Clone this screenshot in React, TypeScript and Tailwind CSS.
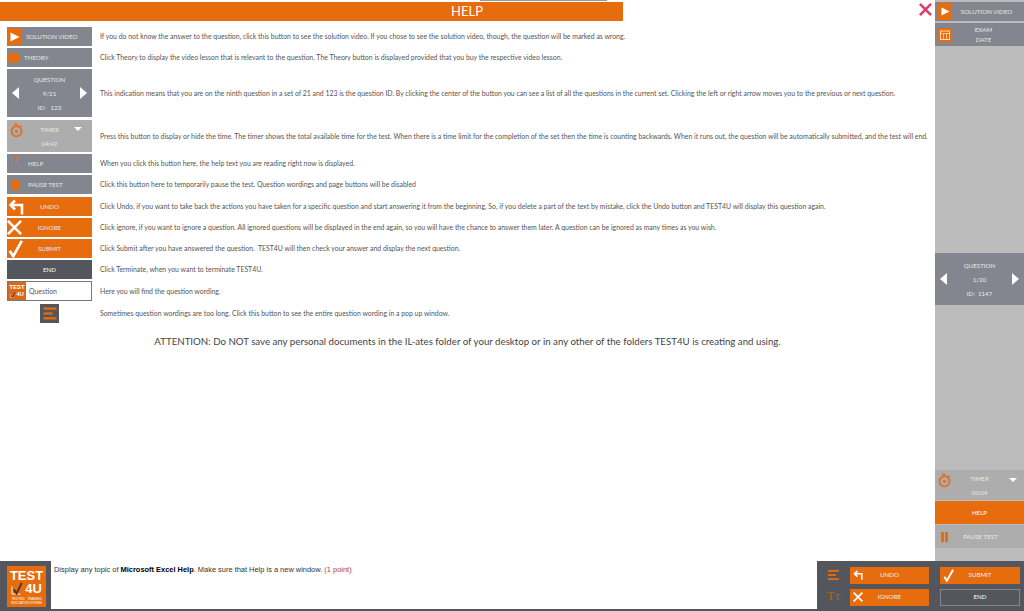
import type { ReactNode } from 'react'

const rows = [
  { h: 'h-[19px]', mt: '', text: 'If you do not know the answer to the question, click this button to see the solution video. If you chose to see the solution video, though, the question will be marked as wrong.' },
  { h: 'h-[19px]', mt: 'mt-[2px]', text: 'Click Theory to display the video lesson that is relevant to the question. The Theory button is displayed provided that you buy the respective video lesson.' },
  { h: 'h-[48px]', mt: 'mt-[2px]', text: 'This indication means that you are on the ninth question in a set of 21 and 123 is the question ID. By clicking the center of the button you can see a list of all the questions in the current set. Clicking the left or right arrow moves you to the previous or next question.' },
  { h: 'h-[32px]', mt: 'mt-[3px]', text: 'Press this button to display or hide the time. The timer shows the total available time for the test. When there is a time limit for the completion of the set then the time is counting backwards. When it runs out, the question will be automatically submitted, and the test will end.' },
  { h: 'h-[19px]', mt: 'mt-[2px]', text: 'When you click this button here, the help text you are reading right now is displayed.' },
  { h: 'h-[19px]', mt: 'mt-[2px]', text: 'Click this button here to temporarily pause the test. Question wordings and page buttons will be disabled' },
  { h: 'h-[19px]', mt: 'mt-[3px]', text: 'Click Undo, if you want to take back the actions you have taken for a specific question and start answering it from the beginning. So, if you delete a part of the text by mistake, click the Undo button and TEST4U will display this question again.' },
  { h: 'h-[19px]', mt: 'mt-[2px]', text: 'Click ignore, if you want to ignore a question. All ignored questions will be displayed in the end again, so you will have the chance to answer them later. A question can be ignored as many times as you wish.' },
  { h: 'h-[19px]', mt: 'mt-[2px]', text: 'Click Submit after you have answered the question.  TEST4U will then check your answer and display the next question.' },
  { h: 'h-[19px]', mt: 'mt-[2px]', text: 'Click Terminate, when you want to terminate TEST4U.' },
  { h: 'h-[20px]', mt: 'mt-[2px]', text: 'Here you will find the question wording.' },
  { h: 'h-[19px]', mt: 'mt-[3px]', text: 'Sometimes question wordings are too long. Click this button to see the entire question wording in a pop up window.' },
]

function Play({ className }: { className: string }) {
  return (
    <svg viewBox="0 0 10 10" className={className} fill="currentColor">
      <path d="M0.5 0.5 L9.5 5 L0.5 9.5 Z" />
    </svg>
  )
}

function Arrow({ dir }: { dir: 'left' | 'right' }) {
  return (
    <svg viewBox="0 0 7 12" className="h-[12px] w-[7px] text-white" fill="currentColor">
      <path d={dir === 'left' ? 'M7 0 V12 L0 6 Z' : 'M0 0 V12 L7 6 Z'} />
    </svg>
  )
}

function TimerIcon({ className }: { className: string }) {
  return (
    <svg viewBox="0 0 16 18" className={className} fill="none" stroke="#e2702a" strokeWidth="2.4">
      <circle cx="8" cy="10" r="6.2" />
      <circle cx="8" cy="10" r="2" fill="#e2702a" stroke="none" />
      <path d="M5 1.5 H9 M12.5 3 L14 4.5" />
    </svg>
  )
}

function UndoIcon({ className }: { className: string }) {
  return (
    <svg viewBox="0 0 16 16" className={className} fill="none" stroke="white" strokeWidth="2.6">
      <path d="M14 15.5 V6 H3" />
      <path d="M7 1.5 L2.5 6 L7 10.5" />
    </svg>
  )
}

function CrossIcon({ className }: { className: string }) {
  return (
    <svg viewBox="0 0 16 16" className={className} fill="none" stroke="white" strokeWidth="2.8">
      <path d="M1 1 L15 15 M15 1 L1 15" />
    </svg>
  )
}

function CheckIcon({ className }: { className: string }) {
  return (
    <svg viewBox="0 0 16 20" className={className} fill="none" stroke="white" strokeWidth="3">
      <path d="M1.5 12 L5.5 18 L15 1" />
    </svg>
  )
}

function LinesIcon({ className }: { className: string }) {
  return (
    <svg viewBox="0 0 14 14" className={className} fill="#e76c0e">
      <rect x="0" y="0.5" width="14" height="2.4" />
      <rect x="0" y="5.8" width="10" height="2.4" />
      <rect x="0" y="11" width="14" height="2.4" />
    </svg>
  )
}

function CalendarIcon({ className }: { className: string }) {
  return (
    <svg viewBox="0 0 14 14" className={className}>
      <rect width="14" height="14" rx="2" fill="#e76c0e" />
      <rect x="2.5" y="3" width="9" height="8.5" fill="none" stroke="#f6d9b8" strokeWidth="1" />
      <path d="M2.5 5.5 H11.5 M5.5 5.5 V11.5 M8.5 5.5 V11.5" stroke="#f6d9b8" strokeWidth="0.8" />
    </svg>
  )
}

function LogoCheck({ className }: { className: string }) {
  return (
    <svg viewBox="0 0 14 14" className={className} fill="none">
      <path d="M1 4.5 V13 H10" stroke="white" strokeWidth="1" />
      <path d="M3 8 L6 12.5 L11.5 1" stroke="#4a3a2a" strokeWidth="2.2" />
    </svg>
  )
}

function SmallLogo() {
  return (
    <div className="flex h-full w-[18px] shrink-0 flex-col items-center justify-center bg-[#d9691a] font-['Liberation_Sans',sans-serif] text-[6px] leading-[7px] font-bold text-white">
      <span>TEST</span>
      <span className="flex items-center">
        <LogoCheck className="h-[6px] w-[6px]" />
        4U
      </span>
    </div>
  )
}

function Logo() {
  return (
    <div className="flex h-[41px] w-[39px] flex-col items-center bg-[#e76c0e] pt-[3px] font-['Liberation_Sans',sans-serif] font-bold text-white">
      <span className="text-[13px] leading-[13px]">TEST</span>
      <span className="flex items-center text-[13px] leading-[13px]">
        <LogoCheck className="mr-[1px] h-[13px] w-[13px]" />
        4U
      </span>
      <span className="mt-[2px] text-[3px] leading-[4px] font-normal">TESTING · TRAINING</span>
      <span className="text-[3px] leading-[4px] font-normal">EDUCATION SYSTEM</span>
    </div>
  )
}

function Btn({ className, children }: { className: string; children: ReactNode }) {
  return <div className={`relative flex h-[19px] items-center justify-center text-[6.2px] text-[#e8e8e8] ${className}`}>{children}</div>
}

function PauseBars() {
  return (
    <>
      <span className="h-[10px] w-[3px] bg-[#e76c0e]" />
      <span className="h-[10px] w-[3px] bg-[#e76c0e]" />
    </>
  )
}

function LeftButtons(i: number) {
  switch (i) {
    case 0:
      return (
        <Btn className="justify-start bg-[#84868f]">
          <span className="absolute left-0 flex h-[17px] w-[15px] items-center justify-center bg-[#e76c0e]">
            <Play className="h-[10px] w-[10px] text-white" />
          </span>
          <span className="pl-[19px]">SOLUTION VIDEO</span>
        </Btn>
      )
    case 1:
      return (
        <Btn className="justify-start bg-[#84868f]">
          <span className="absolute left-[1px] h-[10px] w-[11px] rounded-[4px] bg-[#e76c0e]" />
          <span className="pl-[17px]">THEORY</span>
        </Btn>
      )
    case 2:
      return (
        <div className="flex h-[48px] items-center justify-between bg-[#84868f] px-[5px] text-[6.2px] text-[#e8e8e8]">
          <Arrow dir="left" />
          <div className="flex flex-col items-center gap-[5px] leading-[9px]">
            <span>QUESTION</span>
            <span>9/21</span>
            <span>ID:&nbsp;&nbsp;&nbsp;123</span>
          </div>
          <Arrow dir="right" />
        </div>
      )
    case 3:
      return (
        <div className="relative flex h-[32px] flex-col items-center justify-center gap-[5px] bg-[#adadad] text-[6.2px] leading-[9px] text-[#e8e8e8]">
          <TimerIcon className="absolute top-[3px] left-[3px] h-[15px] w-[13px]" />
          <span className="absolute top-[7px] right-[10px] h-0 w-0 border-x-[4px] border-t-[4px] border-x-transparent border-t-white" />
          <span>TIMER</span>
          <span>04:42</span>
        </div>
      )
    case 4:
      return (
        <Btn className="justify-start bg-[#84868f]">
          <span className="absolute top-0 left-[6px] text-[11px] leading-[11px] font-bold text-[#e76c0e]">?</span>
          <span className="pl-[21px]">HELP</span>
        </Btn>
      )
    case 5:
      return (
        <Btn className="justify-start bg-[#84868f]">
          <span className="absolute left-[5px] flex gap-[1px]">
            <PauseBars />
          </span>
          <span className="pl-[21px]">PAUSE TEST</span>
        </Btn>
      )
    case 6:
      return (
        <Btn className="bg-[#e76c0e]">
          <UndoIcon className="absolute left-[1px] h-[18px] w-[16px]" />
          <span>UNDO</span>
        </Btn>
      )
    case 7:
      return (
        <Btn className="bg-[#e76c0e]">
          <CrossIcon className="absolute left-0 h-[15px] w-[15px]" />
          <span>IGNORE</span>
        </Btn>
      )
    case 8:
      return (
        <Btn className="bg-[#e76c0e]">
          <CheckIcon className="absolute left-[1px] h-[18px] w-[15px]" />
          <span>SUBMIT</span>
        </Btn>
      )
    case 9:
      return <Btn className="bg-[#53565c] text-white">END</Btn>
    case 10:
      return (
        <div className="flex h-[20px] items-center border border-[#777] bg-white text-[6.9px] text-[#555]">
          <SmallLogo />
          <span className="pl-[3px]">Question</span>
        </div>
      )
    default:
      return (
        <div className="flex justify-center">
          <div className="flex h-[19px] w-[19px] items-center justify-center bg-[#53565c]">
            <LinesIcon className="h-[13px] w-[14px]" />
          </div>
        </div>
      )
  }
}

export default function App() {
  return (
    <div className="flex h-[611px] w-[1024px] flex-col overflow-hidden bg-white font-['Lato',sans-serif]">
      <div className="flex h-[561px]">
        <main className="relative w-[935px] pt-[2px]">
          <span className="absolute top-0 left-[480px] h-px w-[127px] bg-[#999]" />
          <div className="flex h-[19px] w-[623px] items-center bg-[#e76c0e] pl-[424px] text-[13px] text-white">
            <span className="w-[86px] text-center">HELP</span>
          </div>
          <div className="mt-[6px] flex flex-col pl-[7px]">
            {rows.map((row, i) => (
              <div key={i} className={`flex items-center ${row.h} ${row.mt}`}>
                <div className="w-[85px] shrink-0">{LeftButtons(i)}</div>
                <p className="pl-[8px] text-[6.9px] whitespace-pre text-[#555]">{row.text}</p>
              </div>
            ))}
          </div>
          <p className="mt-[11px] text-center text-[9.7px] text-[#444]">
            ATTENTION: Do NOT save any personal documents in the IL-ates folder of your desktop or in any other of the folders TEST4U is creating and using.
          </p>
          <svg viewBox="0 0 14 14" className="absolute top-[3px] right-[3px] h-[13px] w-[13px]" fill="none" stroke="#d8416a" strokeWidth="2.8">
            <path d="M1 1 L13 13 M13 1 L1 13" />
          </svg>
        </main>

        <aside className="flex w-[89px] flex-col bg-[#bcbcbc] text-[6.2px] text-[#e8e8e8]">
          <div className="relative mt-[2px] flex h-[19px] items-center justify-center bg-[#84868f]">
            <span className="absolute left-[3px] flex h-[17px] w-[14px] items-center justify-center bg-[#e76c0e]">
              <Play className="h-[9px] w-[9px] text-white" />
            </span>
            <span className="pl-[14px]">SOLUTION VIDEO</span>
          </div>
          <div className="relative mt-[2px] flex h-[23px] flex-col items-center justify-center bg-[#84868f] pl-[8px] leading-[10px]">
            <CalendarIcon className="absolute top-[5px] left-[3px] h-[14px] w-[14px]" />
            <span>EXAM</span>
            <span>DATE</span>
          </div>
          <div className="flex-1" />
          <div className="flex h-[52px] items-center justify-between bg-[#84868f] px-[5px]">
            <Arrow dir="left" />
            <div className="flex flex-col items-center gap-[5px] leading-[9px]">
              <span>QUESTION</span>
              <span>1/20</span>
              <span>ID:&nbsp;&nbsp;1147</span>
            </div>
            <Arrow dir="right" />
          </div>
          <div className="h-[165px]" />
          <div className="relative flex h-[30px] flex-col items-center justify-center gap-[5px] bg-[#adadad] leading-[9px]">
            <TimerIcon className="absolute top-[3px] left-[3px] h-[15px] w-[13px]" />
            <span className="absolute top-[8px] right-[7px] h-0 w-0 border-x-[4px] border-t-[4px] border-x-transparent border-t-white" />
            <span>TIMER</span>
            <span>00:04</span>
          </div>
          <div className="mt-[1px] flex h-[23px] items-center justify-center bg-[#e76c0e] text-white">HELP</div>
          <div className="relative mt-[1px] flex h-[23px] items-center justify-center bg-[#adadad] pl-[2px]">
            <span className="absolute left-[6px] flex gap-[1px]">
              <PauseBars />
            </span>
            PAUSE TEST
          </div>
          <div className="h-[13px]" />
        </aside>
      </div>

      <footer className="flex h-[50px] items-center bg-[#53565c]">
        <div className="ml-[7px] shrink-0"><Logo /></div>
        <div className="ml-[5px] h-[48px] w-[766px] self-start bg-white px-[3px] pt-[3px] font-['Liberation_Sans',sans-serif] text-[7.45px] text-[#333]">
          Display any topic of <b className="text-black">Microsoft Excel Help</b>. Make sure that Help is a new window. <span className="text-[#c0392b]">(1 point)</span>
        </div>
        <div className="ml-[10px] flex w-[13px] flex-col items-center gap-[8px]">
          <LinesIcon className="h-[12px] w-[11px]" />
          <span className="font-['Liberation_Serif',serif] text-[13px] leading-[14px] text-[#b0651f]">Tт</span>
        </div>
        <div className="ml-[10px] flex flex-col gap-[5px] text-[6.2px] text-[#eee]">
          <div className="relative flex h-[17px] w-[79px] items-center justify-center bg-[#e76c0e]">
            <UndoIcon className="absolute left-[3px] h-[12px] w-[10px]" />
            UNDO
          </div>
          <div className="relative flex h-[17px] w-[79px] items-center justify-center bg-[#e76c0e]">
            <CrossIcon className="absolute left-[3px] h-[10px] w-[10px]" />
            IGNORE
          </div>
        </div>
        <div className="ml-[11px] flex flex-col gap-[5px] text-[6.2px] text-[#eee]">
          <div className="relative flex h-[17px] w-[80px] items-center justify-center bg-[#e76c0e]">
            <CheckIcon className="absolute left-[3px] h-[13px] w-[11px]" />
            SUBMIT
          </div>
          <div className="flex h-[17px] w-[80px] items-center justify-center border border-[#888] text-white">END</div>
        </div>
      </footer>
    </div>
  )
}
